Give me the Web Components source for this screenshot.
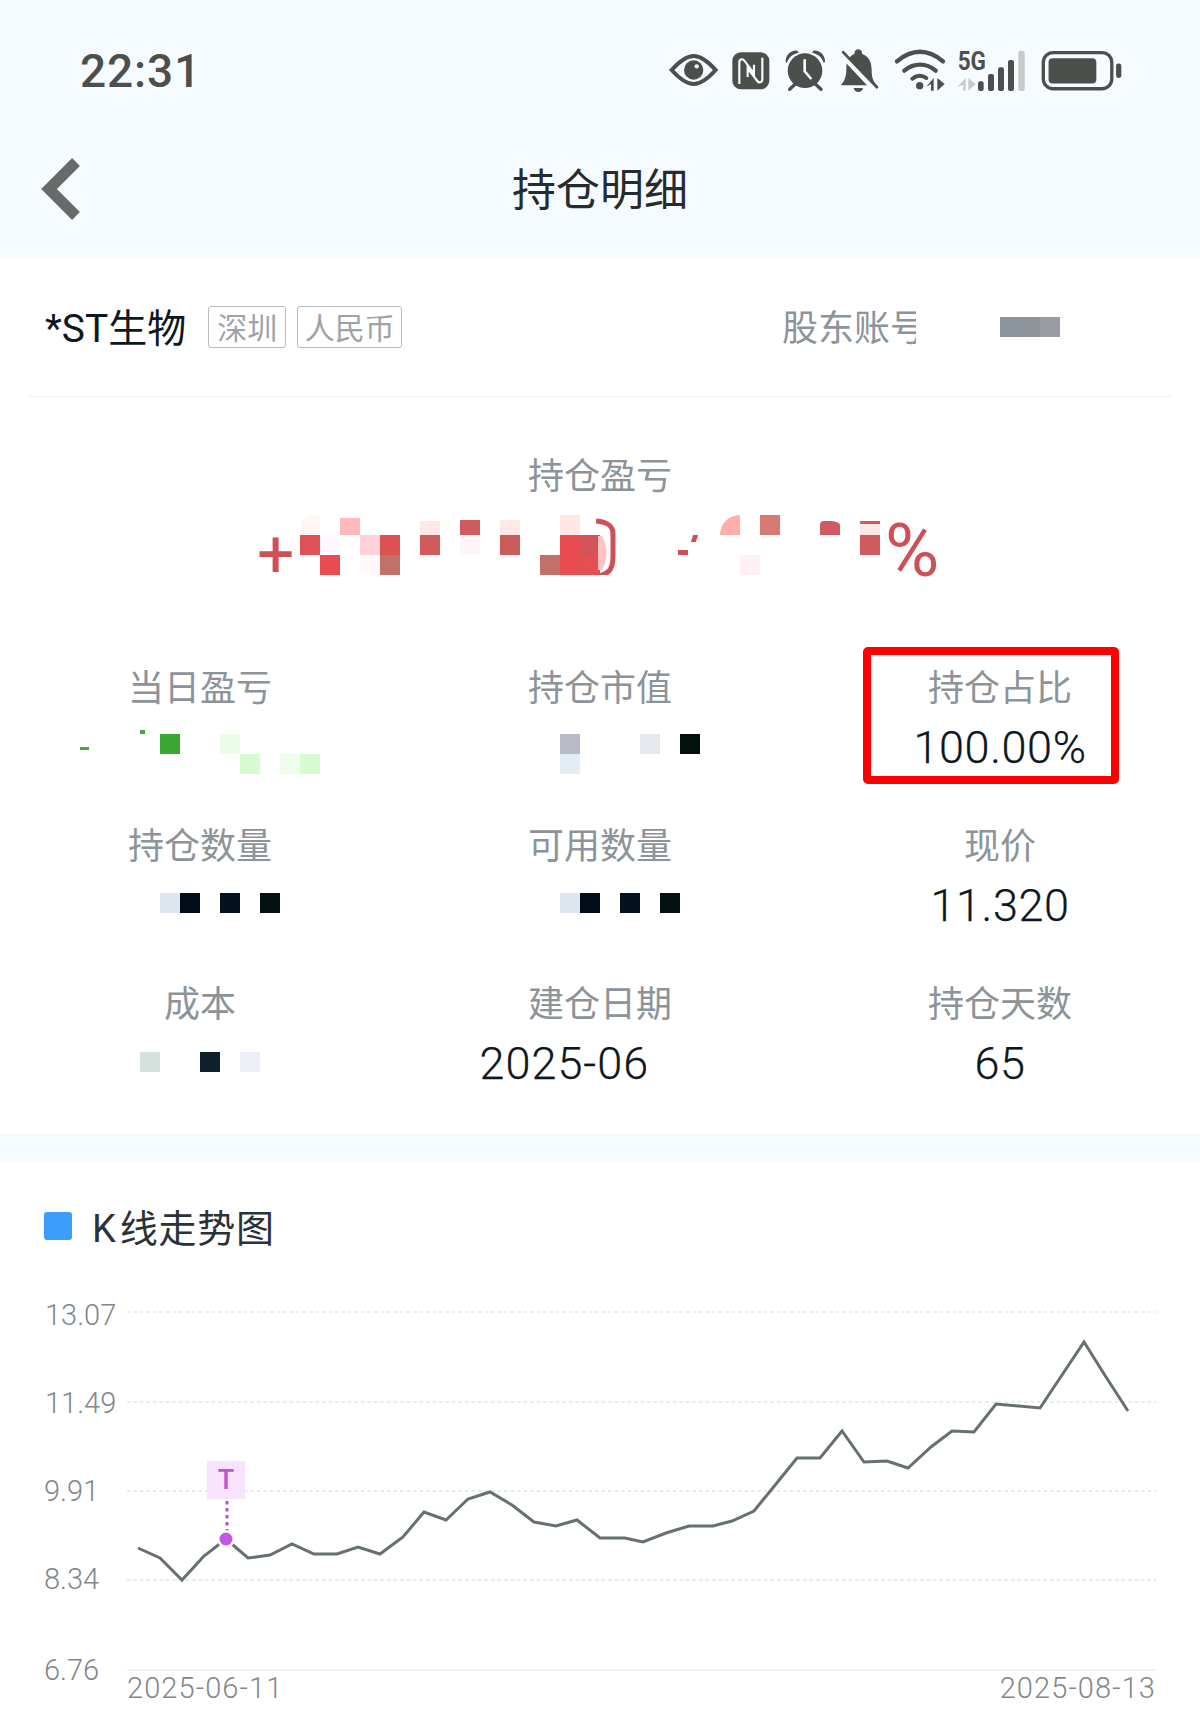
<!DOCTYPE html>
<html lang="zh"><head><meta charset="utf-8"><title>持仓明细</title>
<style>
html,body{margin:0;padding:0;background:#fff;overflow:hidden}
body{width:1200px;height:1734px;font-family:Roboto,"Noto Sans CJK SC",sans-serif;color:#0d1720}
</style></head><body>
<position-page>
  <app-header title-text="持仓明细" time="22:31"></app-header>
  <stock-row></stock-row>
  <pnl-summary></pnl-summary>
  <stats-grid>
    <stat-cell label="当日盈亏"><pixel-mask cols="12" cells="0,0,#46a83c,9px,3px,margin:13px 0 0 0|3,0,#46a83c,5px,4px,margin:-4px 0 0 0|4,0,#3aa830|7,0,#ebfde6|8,1,#d7fbd0|10,1,#f1fdec|11,1,#d5fbcf"></pixel-mask></stat-cell>
    <stat-cell label="持仓市值"><pixel-mask cols="10" cells="3,0,#babac6|3,1,#e3edf5|7,0,#e6eaef|9,0,#02110e"></pixel-mask></stat-cell>
    <stat-cell label="持仓占比" highlight value="100.00%"></stat-cell>
    <stat-cell label="持仓数量" mt="18"><pixel-mask cols="8" cells="2,0,#dde6ef|3,0,#020d1a|5,0,#03101d|7,0,#02100f"></pixel-mask></stat-cell>
    <stat-cell label="可用数量" mt="18"><pixel-mask cols="8" cells="2,0,#dde6ef|3,0,#020d1a|5,0,#03101d|7,0,#02100f"></pixel-mask></stat-cell>
    <stat-cell label="现价" value="11.320"></stat-cell>
    <stat-cell label="成本" mt="19"><pixel-mask cols="6" cells="0,0,#d5dfdc|3,0,#0f2128|5,0,#eeeef7"></pixel-mask></stat-cell>
    <stat-cell label="建仓日期" value="2025-06" clip></stat-cell>
    <stat-cell label="持仓天数" value="65"></stat-cell>
  </stats-grid>
  <kline-panel></kline-panel>
</position-page>
<script>
const def=(name,html,extra={})=>{
  customElements.define(name,class extends HTMLElement{
    constructor(){super();this.attachShadow({mode:'open'}).innerHTML=typeof html==='function'?html(this):html;}
    connectedCallback(){extra.init&&extra.init(this);}
  });
};
const CJK='Roboto,"Noto Sans CJK SC",sans-serif';

def('position-page',`<style>:host{display:block;width:1200px;height:1734px;overflow:hidden;background:#fff}</style><slot></slot>`);

const D='#4c4f4c';
def('status-icons',`<style>
:host{display:flex;align-items:flex-start;height:50px}
svg{display:block;height:50px;flex:none}
text{font-family:Roboto,sans-serif;font-weight:700}
</style>
<svg style="width:50px" viewBox="90 45 150 150">
  <path d="M98 120C124 91 145 78 164 78S204 91 230 120C204 149 183 162 164 162S124 149 98 120Z" fill="none" stroke="${D}" stroke-width="12"/>
  <circle cx="164" cy="120" r="29" fill="${D}"/><circle cx="173" cy="109" r="6.5" fill="#f6fbff"/>
</svg>
<svg style="width:38px;margin-left:13px" viewBox="280 45 114 150">
  <rect x="281" y="67" width="111" height="111" rx="26" fill="${D}"/>
  <path d="M302 162V97C302 87 312 85 317 92L346 130V104M371 83V148C371 158 361 160 356 153L327 115V141" fill="none" stroke="#f6fbff" stroke-width="6.5"/>
</svg>
<svg style="width:41px;margin-left:15px" viewBox="439 45 123 150">
  <path d="M441 96C440 76 456 60 476 62L480 68C462 72 450 82 445 98ZM559 96C560 76 544 60 524 62L520 68C538 72 550 82 555 98Z" fill="${D}"/>
  <path d="M470 162L453 178M530 162L547 178" stroke="${D}" stroke-width="10" stroke-linecap="round"/>
  <circle cx="499" cy="122" r="52" fill="${D}"/>
  <path d="M498 88V124L518 147" fill="none" stroke="#f6fbff" stroke-width="8"/>
</svg>
<svg style="width:40px;margin-left:14px" viewBox="605 45 120 150">
  <path d="M659 58C672 58 671 70 672 72C694 80 700 100 700 122C700 145 706 155 716 166H607C618 155 624 140 624 118C624 95 630 80 648 72C649 68 650 58 659 58Z" fill="${D}"/>
  <path d="M646 174H674C672 190 648 190 646 174Z" fill="${D}"/>
  <path d="M605 68L706 175" stroke="#f6fbff" stroke-width="16"/>
  <path d="M612 64L718 174" stroke="${D}" stroke-width="8"/>
</svg>
<svg style="width:50px;margin-left:15px" viewBox="768 45 150 150">
  <path d="M774 94C820 56 866 56 912 94" fill="none" stroke="${D}" stroke-width="13" stroke-linecap="round"/>
  <path d="M796 122C825 98 862 98 890 122" fill="none" stroke="${D}" stroke-width="13" stroke-linecap="round"/>
  <path d="M820 146C832 135 850 135 862 144" fill="none" stroke="${D}" stroke-width="12" stroke-linecap="round"/>
  <circle cx="842" cy="167" r="11" fill="${D}"/>
  <path d="M884 144V182H876V162L862 170ZM895 144V182L917 162Z" fill="${D}"/>
</svg>
<svg style="width:68px;margin-left:12px" viewBox="952 45 204 150">
  <text x="954" y="121" font-size="76" fill="${D}" textLength="85" lengthAdjust="spacingAndGlyphs">5G</text>
  <path d="M978 144V182H971V164L953 171ZM986 144V182L1008 163Z" fill="#c8c9c9"/>
  <rect x="1015" y="154" width="17" height="29" rx="6" fill="${D}"/>
  <rect x="1045" y="132" width="18" height="51" rx="6" fill="${D}"/>
  <rect x="1075" y="112" width="18" height="71" rx="6" fill="${D}"/>
  <rect x="1105" y="90" width="18" height="93" rx="6" fill="${D}"/>
  <rect x="1136" y="62" width="19" height="121" rx="6" fill="#c8c9c9"/>
</svg>
<svg style="width:81px;margin-left:16px" viewBox="1203 45 246 150">
  <rect x="1210" y="67" width="208" height="110" rx="30" fill="none" stroke="${D}" stroke-width="10"/>
  <rect x="1226" y="84" width="145" height="77" rx="12" fill="${D}"/>
  <rect x="1431" y="100" width="16" height="44" rx="7" fill="${D}"/>
</svg>`);

def('app-header',h=>`<style>
:host{display:block;height:258px;background:#f6fbff;box-sizing:border-box}
.status{height:142px;display:flex;align-items:center;justify-content:space-between;padding:0 78px 0 80px}
.time{font:500 46px/1 Roboto,sans-serif;color:${D};letter-spacing:.9px}
status-icons{margin-top:-2px}
.nav{height:94px;display:grid;grid-template-columns:1fr auto 1fr;align-items:center}
.back{display:block;width:48px;height:70px;margin-left:37px}
h1{margin:0;font:400 44px/48px ${CJK};height:44px;color:#262b2f}
</style>
<div class="status"><span class="time">${h.getAttribute('time')}</span><status-icons></status-icons></div>
<div class="nav">
  <svg class="back" viewBox="36 154 48 70"><path d="M75 162L48 189L75 216" fill="none" stroke="#666a69" stroke-width="11"/></svg>
  <h1>${h.getAttribute('title-text')}</h1><span></span>
</div>`);

def('pixel-mask',h=>{
  const cols=+h.getAttribute('cols');
  const cells=(h.getAttribute('cells')||'').split('|').filter(Boolean).map(c=>{
    const p=c.split(',');const [x,y,col,w,hh,...rest]=p;
    return `<i style="grid-column:${+x+1};grid-row:${+y+1};background:${col};${w?`width:${w};`:''}${hh?`height:${hh};`:''}${rest.join(',')}"></i>`;
  }).join('');
  return `<style>:host{display:grid;grid-template-columns:repeat(${cols},20px);grid-auto-rows:20px;flex:none;width:${cols*20}px}
  i{display:block;width:20px;height:20px}</style>${cells}`;
});

def('stock-row',`<style>
:host{display:flex;align-items:center;height:138px;margin:0 28px;padding:0 0 0 17px;border-bottom:1.5px solid #f2f3f5;box-sizing:content-box}
.name{font:400 39px/44px ${CJK};height:40px;color:#0d1720}
.tag{box-sizing:border-box;height:42px;display:flex;align-items:center;padding:3px 8px 0;border:1.5px solid #b9bcbf;border-radius:3px;font:400 30px/1 ${CJK};color:#9ea3a8;background:#fff}
.tag.a{margin-left:22px}.tag.b{margin-left:11px;padding:3px 6.5px 0}
.acct{margin-left:auto;width:134px;overflow:hidden;white-space:nowrap;font:400 36px/44px ${CJK};height:40px;color:#8c9399}
pixel-mask{margin:0 112px 0 84px}
</style>
<span class="name">*ST生物</span><span class="tag a">深圳</span><span class="tag b">人民币</span>
<span class="acct">股东账号</span>
<pixel-mask cols="3" cells="0,0,#8a959e|1,0,#8f959b|2,0,#9a9ca4"></pixel-mask>`);

def('pnl-summary',`<style>
:host{display:block;height:260px;box-sizing:border-box;padding-top:48px}
.label{text-align:center;font:400 36px/64px ${CJK};height:60px;color:#8c9399}
.value{display:flex;height:60px;margin-top:10px;padding-left:260px;color:#cf4f56;font:400 66px/60px Roboto,sans-serif}
.plus{width:40px;box-sizing:border-box;padding-top:10px;text-indent:-3px}
.arc{display:block;width:24px;height:60px;margin-left:-8px;flex:none}
.dash{width:10px;height:60px;box-sizing:border-box;padding-top:6px;overflow:hidden;margin-left:62px;text-indent:-3px}
.pct{margin-left:5px;font-size:74px;font-weight:400;padding-top:6px;height:54px}
.m2{margin-left:12px}
</style>
<div class="label">持仓盈亏</div>
<div class="value">
  <span class="plus">+</span>
  <pixel-mask cols="15" cells="0,0,#fff6f5,20px,20px,border-top-left-radius:14px|2,0,#ffb9bd,20px,17px,margin-top:3px|6,0,#ffe9e6,20px,14px,margin-top:6px|8,0,#cf5a60,20px,15px,margin-top:5px|10,0,#ffe9e6,20px,15px,margin-top:5px|13,0,#ffe8e3|0,1,#dc5257|1,1,#fff9ff|3,1,#ffd2da|4,1,#dc5050|6,1,#d15a5c|8,1,#fff7f7|10,1,#c95c58|13,1,#e94c50|14,1,#d25458|1,2,#e94c50|3,2,#fff9fd|4,2,#c2706a|12,2,#c2706a|13,2,#e94c50|14,2,#e64f4f"></pixel-mask>
  <svg class="arc" viewBox="590 515 24 60"><path d="M596 576C608 574 611 568 611 556V534C611 526 606 522 594 521" fill="none" stroke="#cf4f56" stroke-width="5"/><path d="M600 536C606 546 606 560 600 570H596V536Z" fill="#ffc4c0"/></svg>
  <span class="dash">-</span>
  <pixel-mask class="m2" cols="9" cells="0,0,#cf4f56,5px,7px,margin:20px 0 0 -8px;transform:skewX(-18deg)|1,0,#ffaeaa,20px,20px,border-top-left-radius:20px|3,0,#d97a72|6,0,#cf5a60,20px,14px,margin-top:6px;border-top-right-radius:10px 4px;border-top-left-radius:4px|8,0,#ffe9e6,20px,14px,margin-top:6px;border-top:3px solid #cf5a60;box-sizing:border-box|8,1,#cf5a60|2,2,#fff0f4"></pixel-mask>
  <span class="pct">%</span>
</div>`);

def('stats-grid',`<style>:host{display:grid;grid-template-columns:repeat(3,400px);grid-auto-rows:120px;row-gap:38px;height:476px;box-sizing:border-box}</style><slot></slot>`);

def('stat-cell',h=>{
  const v=h.getAttribute('value');
  return `<style>
  :host{display:flex;flex-direction:column;align-items:center;position:relative}
  .l{font:400 36px/64px ${CJK};color:#8c9399;height:60px}
  .v{height:60px;font:300 45px/61px Roboto,sans-serif;color:#0d1720;letter-spacing:.6px;white-space:nowrap;-webkit-text-stroke:.25px #0d1720}
  .clip{width:166px;overflow:hidden;margin-left:-75px;letter-spacing:1px}
  .slot{display:block;height:60px;padding-top:${h.getAttribute('mt')||17}px;box-sizing:border-box}
  .box{position:absolute;left:63px;top:-10px;width:256px;height:137px;box-sizing:border-box;border:8px solid #f00;border-radius:5px}
  </style><div class="l">${h.getAttribute('label')}</div>
  ${v?`<div class="v ${h.hasAttribute('clip')?'clip':''}">${v}</div>`:`<div class="slot"><slot></slot></div>`}
  ${h.hasAttribute('highlight')?'<div class="box"></div>':''}`;
});

const pts="138,1548 160,1558 182,1580 204,1556 226,1539 248,1558 270,1555 292,1544 314,1554 337,1554 358,1547 380,1554 403,1537 424,1512 446,1520 468,1499 490,1492 512,1505 534,1522 556,1526 577,1520 600,1538 625,1538 643,1542 666,1533 689,1526 713,1526 732,1521 754,1511 776,1484 797,1458 820,1458 842,1431 864,1462 887,1461 908,1468 931,1447 952,1431 974,1432 996,1404 1040,1408 1062,1375 1084,1342 1106,1377 1128,1411";
const ylab=[['13.07',1315],['11.49',1403],['9.91',1491],['8.34',1579],['6.76',1670]];
def('kline-panel',`<style>
:host{display:block;height:601px;box-sizing:border-box;border-top:29px solid #f6fbff;background:#fff}
.head{display:flex;align-items:center;height:40px;margin-top:45px;padding-left:44px}
.sq{width:28px;height:28px;border-radius:3px;background:#3d9dfb;margin-top:-2px}
h2{margin:0 0 0 20px;font:400 38px/44px ${CJK};height:40px;color:#2b3237;letter-spacing:.8px}
h2 b{font-weight:400;margin-right:3px}
svg{display:block;margin-top:13px}
text{font-family:Roboto,sans-serif;font-size:29px;font-weight:300;fill:#7f878d}
</style>
<div class="head"><span class="sq"></span><h2><b>K</b>线走势图</h2></div>
<svg width="1200" height="474" viewBox="0 1260 1200 474">
  ${[1312,1402,1491,1580].map(y=>`<line x1="127" x2="1156" y1="${y}" y2="${y}" stroke="#e3e5e7" stroke-width="1.5" stroke-dasharray="3.5 3"/>`).join('')}
  <line x1="127" x2="1156" y1="1670" y2="1670" stroke="#eceef0" stroke-width="1.5"/>
  ${ylab.map(([t,y])=>`<text x="${t.length>4?45:44}" y="${y+10}" letter-spacing="0">${t}</text>`).join('')}
  <text x="127" y="1698" letter-spacing="1.1">2025-06-11</text>
  <text x="1156" y="1698" text-anchor="end" letter-spacing="1.1">2025-08-13</text>
  <polyline points="${pts}" fill="none" stroke="#677070" stroke-width="3" stroke-linejoin="miter"/>
  <rect x="207" y="1461" width="38" height="38" fill="#f8e3fc"/>
  <text x="226" y="1489" text-anchor="middle" style="fill:#bb55d9;font-size:27px;font-weight:500">T</text>
  <line x1="227" x2="227" y1="1501" y2="1531" stroke="#b84fd6" stroke-width="3" stroke-dasharray="3.5 3.5"/>
  <circle cx="226" cy="1539" r="9" fill="#fff"/>
  <circle cx="226" cy="1539" r="6.5" fill="#c456e6"/>
</svg>`);
</script>
</body></html>
